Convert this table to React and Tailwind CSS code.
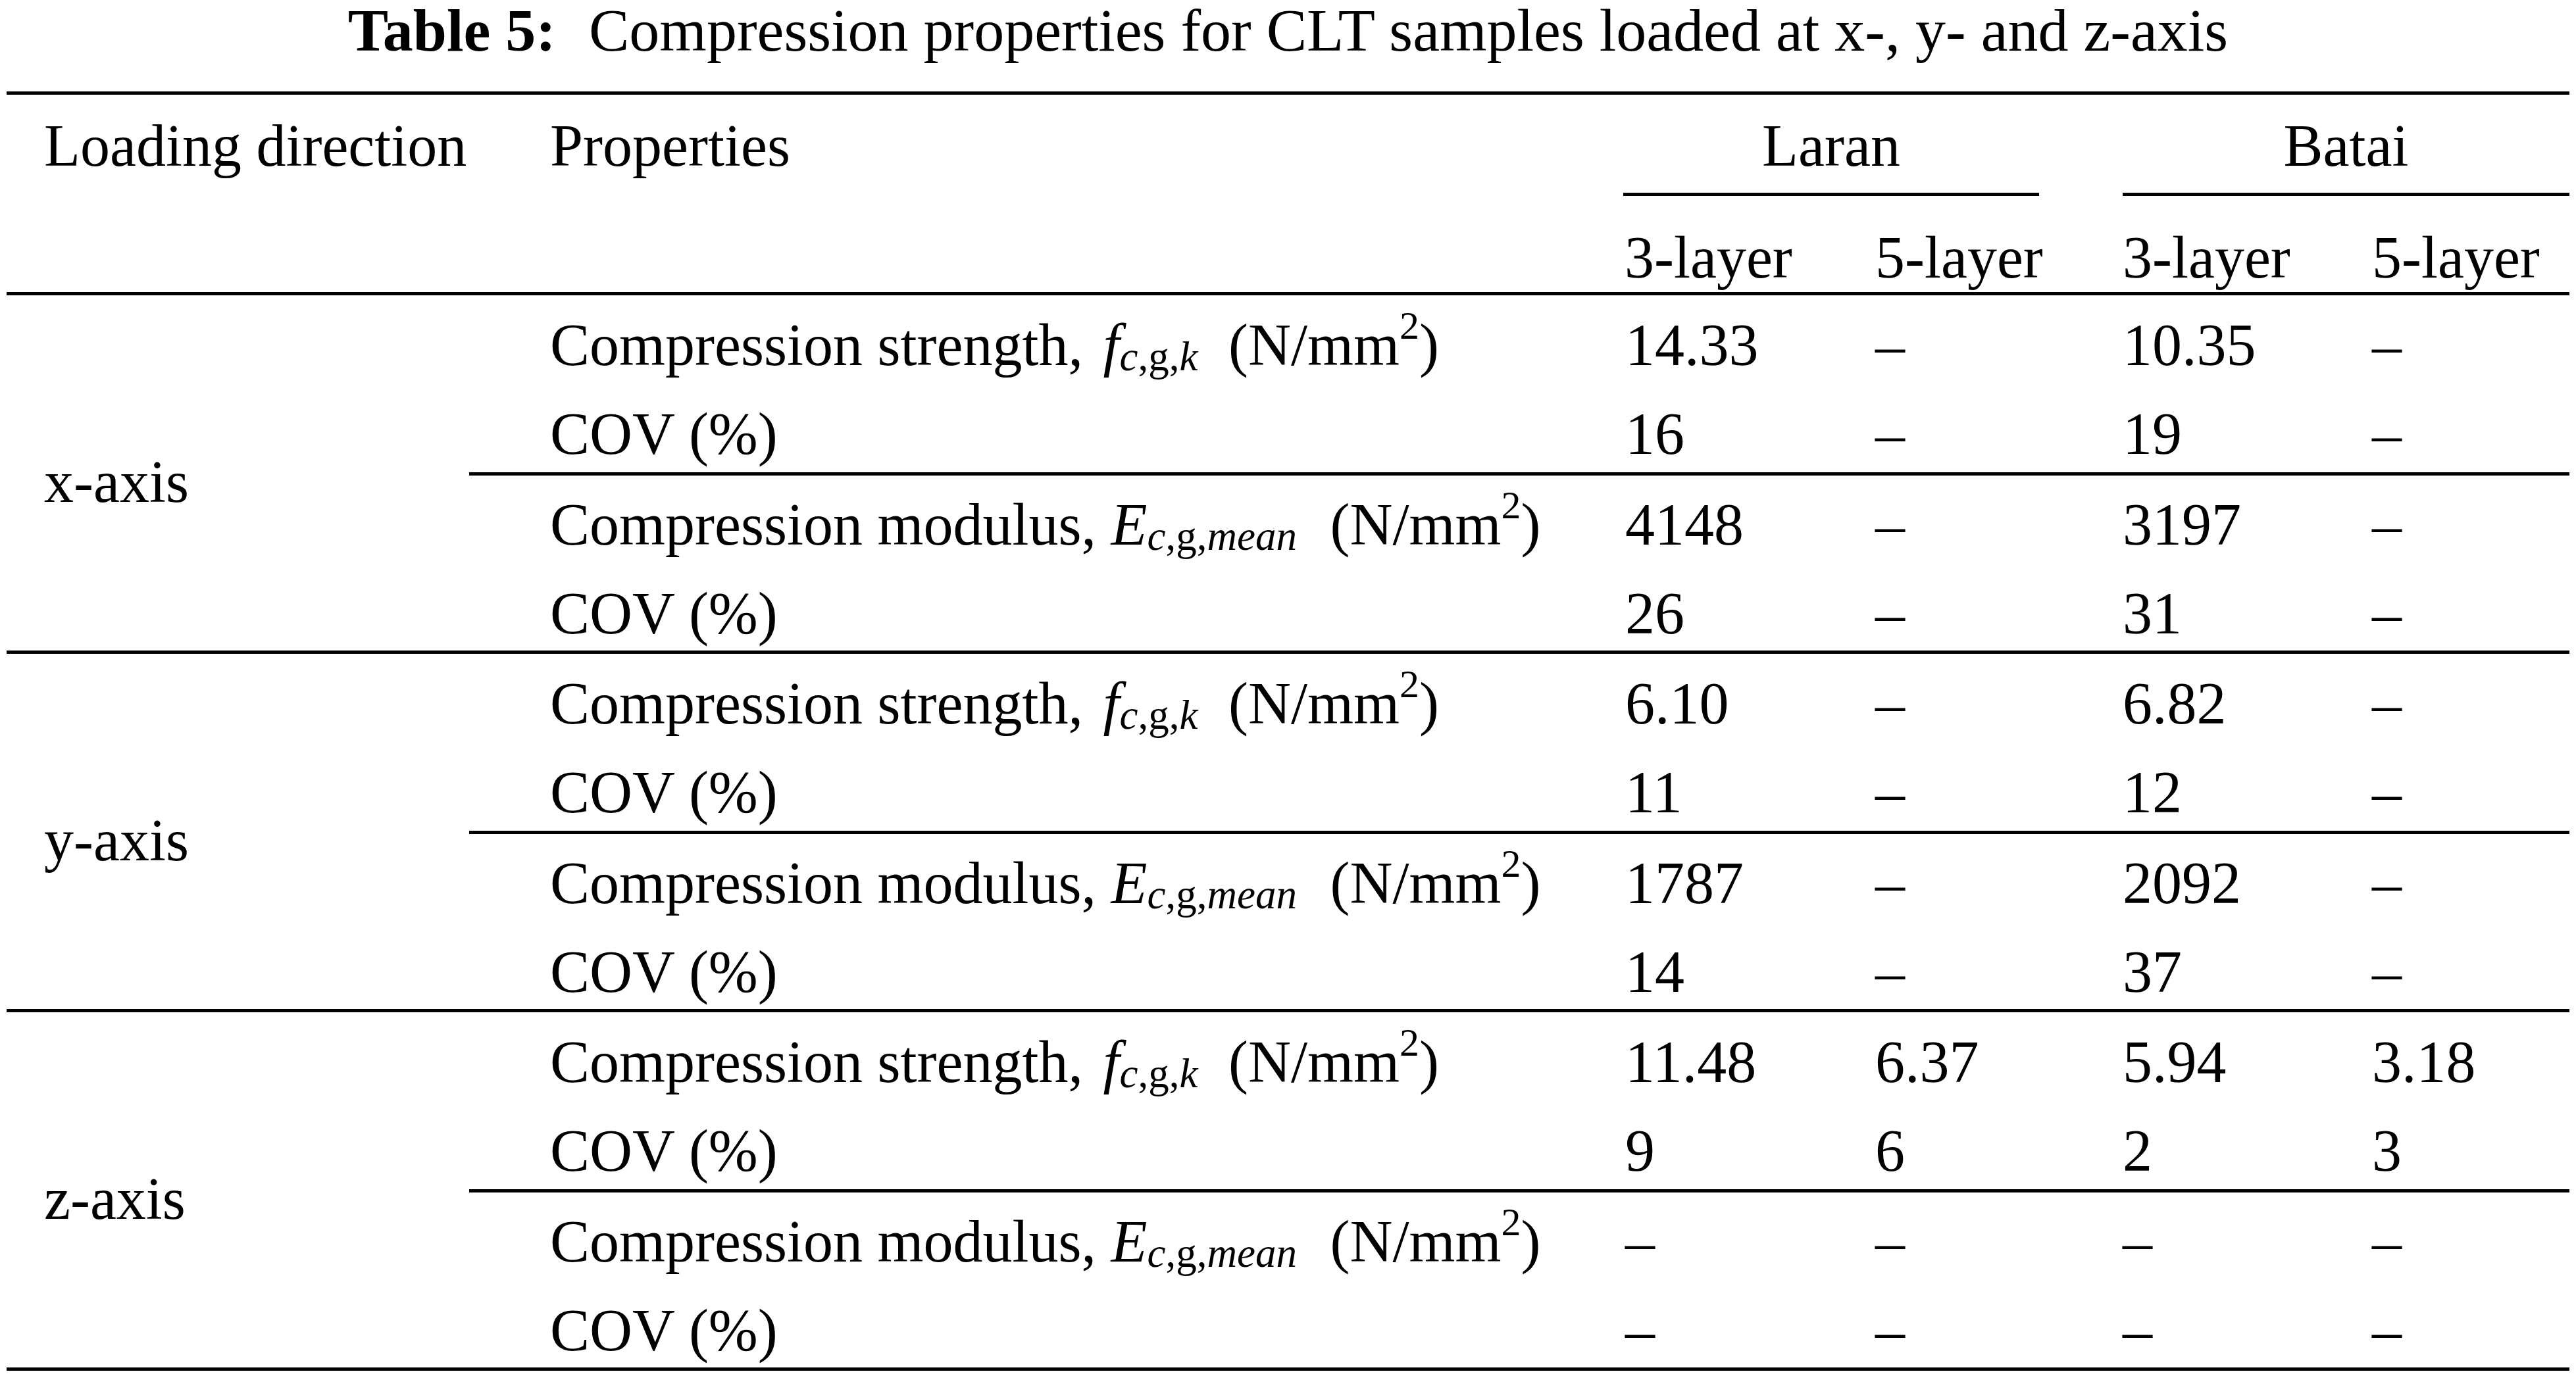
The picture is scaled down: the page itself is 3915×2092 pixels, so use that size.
import React from "react";

const cols = "grid grid-cols-[1754px_383px_376px_379px_300px]";

const Strength = () => (
  <span>
    Compression strength, <i className="ml-[8px]">f</i>
    <sub className="text-[63px] bottom-[-8px]">
      <i>c</i>,g,<i>k</i>
    </sub>{" "}
    <span className="ml-[24px]">
      (N/mm<sup className="text-[60px] top-[-40px]">2</sup>)
    </span>
  </span>
);

const Modulus = () => (
  <span>
    Compression modulus, <i>E</i>
    <sub className="text-[63px] bottom-[-8px]">
      <i>c</i>,g,<i>mean</i>
    </sub>{" "}
    <span className="ml-[28px]">
      (N/mm<sup className="text-[60px] top-[-40px]">2</sup>)
    </span>
  </span>
);

const Row = ({ label, values }) => (
  <div className={cols}>
    <div className="h-[90px] pl-[123px] whitespace-nowrap">{label}</div>
    <div className="h-[90px] pl-[3px]">{values[0]}</div>
    <div className="h-[90px]">{values[1]}</div>
    <div className="h-[90px]">{values[2]}</div>
    <div className="h-[90px]">{values[3]}</div>
  </div>
);

const groups = [
  {
    axis: "x-axis",
    a: [["14.33", "–", "10.35", "–"], ["16", "–", "19", "–"]],
    b: [["4148", "–", "3197", "–"], ["26", "–", "31", "–"]],
  },
  {
    axis: "y-axis",
    a: [["6.10", "–", "6.82", "–"], ["11", "–", "12", "–"]],
    b: [["1787", "–", "2092", "–"], ["14", "–", "37", "–"]],
  },
  {
    axis: "z-axis",
    a: [["11.48", "6.37", "5.94", "3.18"], ["9", "6", "2", "3"]],
    b: [["–", "–", "–", "–"], ["–", "–", "–", "–"]],
  },
];

export default function App() {
  return (
    <div className="w-[3915px] h-[2092px] bg-white text-black font-['Liberation_Serif',serif] text-[90px] leading-none">
      <div className="h-[90px] text-center whitespace-nowrap text-[92px]">
        <span className="font-bold">Table 5:</span>
        <span className="ml-[50px]">
          Compression properties for CLT samples loaded at x-, y- and z-axis
        </span>
      </div>

      <div className="ml-[10px] w-[3895px] mt-[49px] border-t-[5px] border-black">
        {/* header */}
        <div className="grid grid-cols-[703px_1754px_383px_376px_379px_300px] border-b-[5px] border-black">
          <div className="row-span-2 pl-[57px] pt-[33px] whitespace-nowrap">Loading direction</div>
          <div className="row-span-2 pl-[123px] pt-[33px]">Properties</div>
          <div className="col-span-2 mr-[127px] pt-[33px] pb-[26px] border-b-[5px] border-black text-center">
            Laran
          </div>
          <div className="col-span-2 pt-[33px] pb-[26px] border-b-[5px] border-black text-center">
            Batai
          </div>
          <div className="pt-[49px] pb-[7px] pl-[2px]">3-layer</div>
          <div className="pt-[49px] pb-[7px]">5-layer</div>
          <div className="pt-[49px] pb-[7px]">3-layer</div>
          <div className="pt-[49px] pb-[7px]">5-layer</div>
        </div>

        {groups.map((g) => (
          <div key={g.axis} className="flex border-b-[5px] border-black">
            <div className="w-[703px] shrink-0 pl-[57px] pt-[239px]">{g.axis}</div>
            <div className="flex-1 flex flex-col">
              <div className="flex flex-col gap-[45px] pt-[31px] pb-[13px] border-b-[5px] border-black">
                <Row label={<Strength />} values={g.a[0]} />
                <Row label="COV (%)" values={g.a[1]} />
              </div>
              <div className="flex flex-col gap-[45px] pt-[30px] pb-[11px]">
                <Row label={<Modulus />} values={g.b[0]} />
                <Row label="COV (%)" values={g.b[1]} />
              </div>
            </div>
          </div>
        ))}
      </div>
    </div>
  );
}
